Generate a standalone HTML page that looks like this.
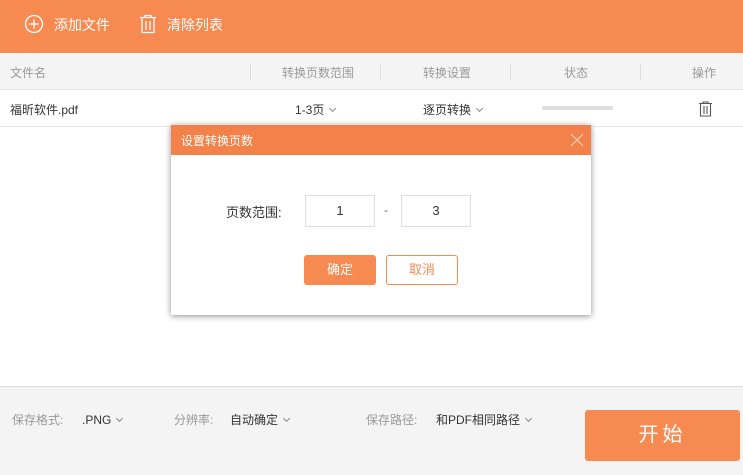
<!DOCTYPE html><html><head><meta charset="utf-8"><style>
*{margin:0;padding:0;box-sizing:border-box}
body{width:743px;height:475px;position:relative;overflow:hidden;background:#fff;font-family:"Liberation Sans","Noto Sans CJK SC",sans-serif;font-size:12px;color:#333}
.a{position:absolute;white-space:nowrap}
.top{left:0;top:0;width:743px;height:53px;background:#F78A51}
.th{left:0;top:53px;width:743px;height:37px;background:#f4f4f4;border-bottom:1px solid #e8e8e8}
.sep{width:1px;height:18px;background:#ddd;top:63px}
.hd{color:#999;top:64px;font-size:12px}
.row{left:0;top:90px;width:743px;height:37px;border-bottom:1px solid #e8e8e8}
.ft{left:0;top:386px;width:743px;height:89px;background:#f4f4f4;border-top:1px solid #ddd}
.gl{color:#999;top:411px}
.dk{color:#333;top:411px}
.car{display:inline-block;width:5px;height:5px;border-right:1px solid #888;border-bottom:1px solid #888;transform:rotate(45deg);margin-left:6px;position:relative;top:-3px}
</style></head><body>
<div class="a top"></div>
<svg class="a" style="left:24px;top:14px" width="20" height="20" viewBox="0 0 20 20"><circle cx="10" cy="10" r="8.5" fill="none" stroke="#fff" stroke-width="1.3"/><path d="M10 5v10M5 10h10" stroke="#fff" stroke-width="1.3"/></svg>
<div class="a" style="left:54px;top:15px;color:#fff;font-size:14px">添加文件</div>
<svg class="a" style="left:139px;top:14px" width="18" height="20" viewBox="0 0 18 20"><path d="M1 3.5h16M6 3.5V1.5h6v2M3 3.5v15h12v-15M7 7v9M11 7v9" fill="none" stroke="#fff" stroke-width="1.3"/></svg>
<div class="a" style="left:167px;top:15px;color:#fff;font-size:14px">清除列表</div>
<div class="a th"></div>
<div class="a hd" style="left:10px">文件名</div>
<div class="a sep" style="left:250px"></div>
<div class="a hd" style="left:282px">转换页数范围</div>
<div class="a sep" style="left:380px"></div>
<div class="a hd" style="left:423px">转换设置</div>
<div class="a sep" style="left:510px"></div>
<div class="a hd" style="left:564px">状态</div>
<div class="a sep" style="left:640px"></div>
<div class="a hd" style="left:692px">操作</div>
<div class="a row"></div>
<div class="a" style="left:10px;top:101px">福昕软件.pdf</div>
<div class="a" style="left:295px;top:101px">1-3页<span class="car"></span></div>
<div class="a" style="left:423px;top:101px">逐页转换<span class="car"></span></div>
<div class="a" style="left:542px;top:106px;width:71px;height:4px;border-radius:2px;background:#ddd"></div>
<svg class="a" style="left:698px;top:101px" width="15" height="16" viewBox="0 0 15 16"><path d="M1 2.5h13M5 2.5V1h5v1.5M2.5 2.5v12.5h10V2.5M6 5v8M9 5v8" fill="none" stroke="#555" stroke-width="1.1"/></svg>
<div class="a ft"></div>
<div class="a gl" style="left:12px">保存格式:</div>
<div class="a dk" style="left:82px;top:413px">.PNG<span class="car"></span></div>
<div class="a gl" style="left:174px">分辨率:</div>
<div class="a dk" style="left:230px">自动确定<span class="car"></span></div>
<div class="a gl" style="left:366px">保存路径:</div>
<div class="a dk" style="left:436px">和PDF相同路径<span class="car"></span></div>
<div class="a" style="left:585px;top:410px;width:155px;height:51px;background:#F78A51;border-radius:3px;color:#fff;font-size:20px;text-align:center;line-height:51px;letter-spacing:4px">开始</div>
<div class="a" style="left:171px;top:125px;width:420px;height:190px;background:#fff;box-shadow:0 1px 6px rgba(0,0,0,.45)"></div>
<div class="a" style="left:171px;top:125px;width:420px;height:30px;background:#F2824A"></div>
<div class="a" style="left:181px;top:132px;color:#fff;font-size:12px">设置转换页数</div>
<svg class="a" style="left:570px;top:133px" width="14" height="14" viewBox="0 0 14 14"><path d="M1 1l12 12M13 1L1 13" stroke="#fbd6c1" stroke-width="1"/></svg>
<div class="a" style="left:226px;top:202px;font-size:13px">页数范围:</div>
<div class="a" style="left:305px;top:195px;width:70px;height:32px;border:1px solid #ddd;text-align:center;line-height:30px;font-size:13px">1</div>
<div class="a" style="left:384px;top:203px;color:#666">-</div>
<div class="a" style="left:401px;top:195px;width:70px;height:32px;border:1px solid #ddd;text-align:center;line-height:30px;font-size:13px">3</div>
<div class="a" style="left:304px;top:255px;width:72px;height:30px;background:#F78A51;border-radius:3px;color:#fff;text-align:center;line-height:30px;font-size:13px">确定</div>
<div class="a" style="left:386px;top:255px;width:72px;height:30px;border:1px solid #F78A51;border-radius:3px;color:#F78A51;text-align:center;line-height:28px;font-size:13px">取消</div>
</body></html>
